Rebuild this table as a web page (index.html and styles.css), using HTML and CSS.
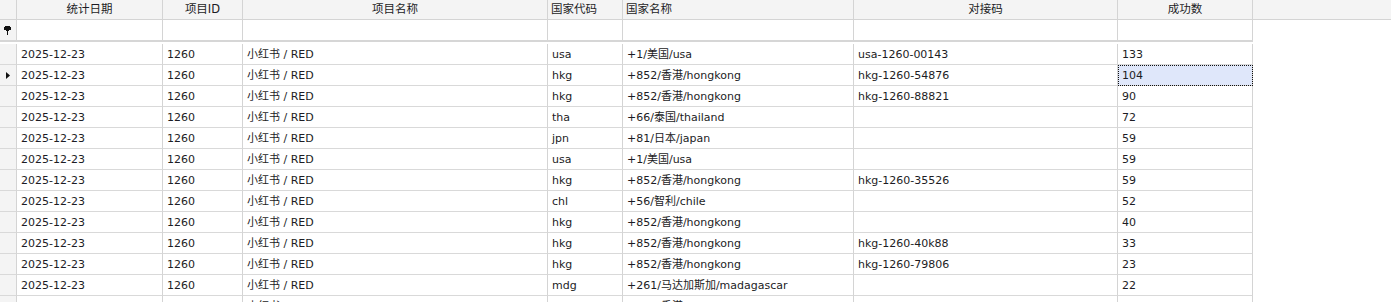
FILE: index.html
```html
<!DOCTYPE html>
<html lang="zh-CN">
<head>
<meta charset="utf-8">
<title>Grid</title>
<link rel="stylesheet" href="styles.css">
</head>
<body>
<div class="grid">
  <div class="header-panel">
    <div class="row head">
      <div class="cell ind"></div>
      <div class="cell c">统计日期</div>
      <div class="cell c">项目ID</div>
      <div class="cell c">项目名称</div>
      <div class="cell">国家代码</div>
      <div class="cell">国家名称</div>
      <div class="cell c">对接码</div>
      <div class="cell c">成功数</div>
    </div>
  </div>
  <div class="row filter">
    <div class="cell ind"><svg width="7" height="9" viewBox="0 0 7 9"><path d="M1 0h5v1h1v3H0V1h1z M2 4h3v1H2z M3 5h1v4H3z" fill="#111"/></svg></div>
    <div class="cell"></div><div class="cell"></div><div class="cell"></div><div class="cell"></div><div class="cell"></div><div class="cell"></div><div class="cell"></div>
  </div>
  <div class="sep"></div>
  <div class="body">
    <div class="row data"><div class="cell ind"></div><div class="cell">2025-12-23</div><div class="cell">1260</div><div class="cell">小红书 / RED</div><div class="cell">usa</div><div class="cell">+1/美国/usa</div><div class="cell">usa-1260-00143</div><div class="cell">133</div></div>
    <div class="row data"><div class="cell ind"><svg width="4" height="7" viewBox="0 0 4 7"><path d="M0 0l4 3.5L0 7z" fill="#111"/></svg></div><div class="cell">2025-12-23</div><div class="cell">1260</div><div class="cell">小红书 / RED</div><div class="cell">hkg</div><div class="cell">+852/香港/hongkong</div><div class="cell">hkg-1260-54876</div><div class="cell focus">104</div></div>
    <div class="row data"><div class="cell ind"></div><div class="cell">2025-12-23</div><div class="cell">1260</div><div class="cell">小红书 / RED</div><div class="cell">hkg</div><div class="cell">+852/香港/hongkong</div><div class="cell">hkg-1260-88821</div><div class="cell">90</div></div>
    <div class="row data"><div class="cell ind"></div><div class="cell">2025-12-23</div><div class="cell">1260</div><div class="cell">小红书 / RED</div><div class="cell">tha</div><div class="cell">+66/泰国/thailand</div><div class="cell"></div><div class="cell">72</div></div>
    <div class="row data"><div class="cell ind"></div><div class="cell">2025-12-23</div><div class="cell">1260</div><div class="cell">小红书 / RED</div><div class="cell">jpn</div><div class="cell">+81/日本/japan</div><div class="cell"></div><div class="cell">59</div></div>
    <div class="row data"><div class="cell ind"></div><div class="cell">2025-12-23</div><div class="cell">1260</div><div class="cell">小红书 / RED</div><div class="cell">usa</div><div class="cell">+1/美国/usa</div><div class="cell"></div><div class="cell">59</div></div>
    <div class="row data"><div class="cell ind"></div><div class="cell">2025-12-23</div><div class="cell">1260</div><div class="cell">小红书 / RED</div><div class="cell">hkg</div><div class="cell">+852/香港/hongkong</div><div class="cell">hkg-1260-35526</div><div class="cell">59</div></div>
    <div class="row data"><div class="cell ind"></div><div class="cell">2025-12-23</div><div class="cell">1260</div><div class="cell">小红书 / RED</div><div class="cell">chl</div><div class="cell">+56/智利/chile</div><div class="cell"></div><div class="cell">52</div></div>
    <div class="row data"><div class="cell ind"></div><div class="cell">2025-12-23</div><div class="cell">1260</div><div class="cell">小红书 / RED</div><div class="cell">hkg</div><div class="cell">+852/香港/hongkong</div><div class="cell"></div><div class="cell">40</div></div>
    <div class="row data"><div class="cell ind"></div><div class="cell">2025-12-23</div><div class="cell">1260</div><div class="cell">小红书 / RED</div><div class="cell">hkg</div><div class="cell">+852/香港/hongkong</div><div class="cell">hkg-1260-40k88</div><div class="cell">33</div></div>
    <div class="row data"><div class="cell ind"></div><div class="cell">2025-12-23</div><div class="cell">1260</div><div class="cell">小红书 / RED</div><div class="cell">hkg</div><div class="cell">+852/香港/hongkong</div><div class="cell">hkg-1260-79806</div><div class="cell">23</div></div>
    <div class="row data"><div class="cell ind"></div><div class="cell">2025-12-23</div><div class="cell">1260</div><div class="cell">小红书 / RED</div><div class="cell">mdg</div><div class="cell">+261/马达加斯加/madagascar</div><div class="cell"></div><div class="cell">22</div></div>
    <div class="row data"><div class="cell ind"></div><div class="cell">2025-12-23</div><div class="cell">1260</div><div class="cell">小红书 / RED</div><div class="cell">hkg</div><div class="cell">+852/香港/hongkong</div><div class="cell"></div><div class="cell">21</div></div>
  </div>
</div>
</body>
</html>
```
FILE: styles.css
```css
html, body {
  margin: 0;
  padding: 0;
  background: #ffffff;
  overflow: hidden;
}
.grid {
  width: 1391px;
  height: 302px;
  overflow: hidden;
  font-family: "DejaVu Sans", "Noto Sans CJK SC", sans-serif;
  font-size: 11px;
  color: #1c1c24;
}
.header-panel {
  background: #f4f4f4;
  border-bottom: 1px solid #d4d4d4;
}
.row {
  display: grid;
  grid-template-columns: 17px 146px 80px 305px 75px 231px 264px 135px;
  width: 1253px;
}
.cell {
  box-sizing: border-box;
  border-right: 1px solid #d4d4d4;
  padding: 0 4px;
  white-space: nowrap;
  overflow: hidden;
}
.cell.c {
  text-align: center;
}
.head .cell {
  height: 19px;
  line-height: 19px;
  font-size: 11.5px;
  padding: 0 3px;
}
.filter .cell {
  height: 20px;
}
.filter .ind {
  display: flex;
  align-items: center;
  justify-content: center;
  padding: 0 1px 0 0;
}
.ind {
  background: #f4f4f4;
  padding: 0;
}
.sep {
  width: 1253px;
  height: 2px;
  background: #d6d6d6;
  border-bottom: 2px solid #ffffff;
}
.data .cell {
  height: 21px;
  padding-top: 1px;
  line-height: 19px;
  border-bottom: 1px solid #d9d9d9;
}
.data .ind {
  display: flex;
  align-items: center;
  justify-content: center;
  padding: 0 1px 0 0;
}
.data .focus {
  background: #dfe7fa;
  outline: 1px dotted #111;
  outline-offset: -1px;
}
```
